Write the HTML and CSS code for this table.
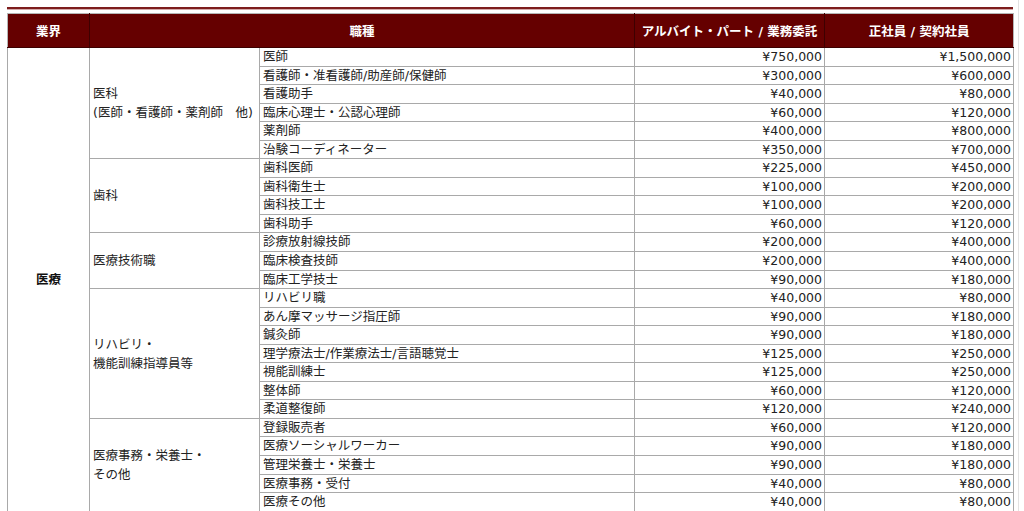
FILE: index.html
```html
<!DOCTYPE html>
<html lang="ja">
<head>
<meta charset="utf-8">
<link rel="stylesheet" href="styles.css">
</head>
<body>
<div class="page">
  <div class="rule"></div>
  <table class="fee">
    <colgroup>
      <col class="c1"><col class="c2"><col class="c3"><col class="c4"><col class="c5">
    </colgroup>
    <thead>
      <tr>
        <th>業界</th>
        <th colspan="2">職種</th>
        <th>アルバイト・パート / 業務委託</th>
        <th>正社員 / 契約社員</th>
      </tr>
    </thead>
    <tbody>
      <tr>
        <td class="ind" rowspan="25">医療</td>
        <td class="grp" rowspan="6">医科<br>(医師・看護師・薬剤師　他)</td>
        <td class="job">医師</td><td class="num">¥750,000</td><td class="num">¥1,500,000</td>
      </tr>
      <tr><td class="job">看護師・准看護師/助産師/保健師</td><td class="num">¥300,000</td><td class="num">¥600,000</td></tr>
      <tr><td class="job">看護助手</td><td class="num">¥40,000</td><td class="num">¥80,000</td></tr>
      <tr><td class="job">臨床心理士・公認心理師</td><td class="num">¥60,000</td><td class="num">¥120,000</td></tr>
      <tr><td class="job">薬剤師</td><td class="num">¥400,000</td><td class="num">¥800,000</td></tr>
      <tr><td class="job">治験コーディネーター</td><td class="num">¥350,000</td><td class="num">¥700,000</td></tr>
      <tr>
        <td class="grp" rowspan="4">歯科</td>
        <td class="job">歯科医師</td><td class="num">¥225,000</td><td class="num">¥450,000</td>
      </tr>
      <tr><td class="job">歯科衛生士</td><td class="num">¥100,000</td><td class="num">¥200,000</td></tr>
      <tr><td class="job">歯科技工士</td><td class="num">¥100,000</td><td class="num">¥200,000</td></tr>
      <tr><td class="job">歯科助手</td><td class="num">¥60,000</td><td class="num">¥120,000</td></tr>
      <tr>
        <td class="grp" rowspan="3">医療技術職</td>
        <td class="job">診療放射線技師</td><td class="num">¥200,000</td><td class="num">¥400,000</td>
      </tr>
      <tr><td class="job">臨床検査技師</td><td class="num">¥200,000</td><td class="num">¥400,000</td></tr>
      <tr><td class="job">臨床工学技士</td><td class="num">¥90,000</td><td class="num">¥180,000</td></tr>
      <tr>
        <td class="grp" rowspan="7">リハビリ・<br>機能訓練指導員等</td>
        <td class="job">リハビリ職</td><td class="num">¥40,000</td><td class="num">¥80,000</td>
      </tr>
      <tr><td class="job">あん摩マッサージ指圧師</td><td class="num">¥90,000</td><td class="num">¥180,000</td></tr>
      <tr><td class="job">鍼灸師</td><td class="num">¥90,000</td><td class="num">¥180,000</td></tr>
      <tr><td class="job">理学療法士/作業療法士/言語聴覚士</td><td class="num">¥125,000</td><td class="num">¥250,000</td></tr>
      <tr><td class="job">視能訓練士</td><td class="num">¥125,000</td><td class="num">¥250,000</td></tr>
      <tr><td class="job">整体師</td><td class="num">¥60,000</td><td class="num">¥120,000</td></tr>
      <tr><td class="job">柔道整復師</td><td class="num">¥120,000</td><td class="num">¥240,000</td></tr>
      <tr>
        <td class="grp" rowspan="5">医療事務・栄養士・<br>その他</td>
        <td class="job">登録販売者</td><td class="num">¥60,000</td><td class="num">¥120,000</td>
      </tr>
      <tr><td class="job">医療ソーシャルワーカー</td><td class="num">¥90,000</td><td class="num">¥180,000</td></tr>
      <tr><td class="job">管理栄養士・栄養士</td><td class="num">¥90,000</td><td class="num">¥180,000</td></tr>
      <tr><td class="job">医療事務・受付</td><td class="num">¥40,000</td><td class="num">¥80,000</td></tr>
      <tr><td class="job">医療その他</td><td class="num">¥40,000</td><td class="num">¥80,000</td></tr>
    </tbody>
  </table>
</div>
</body>
</html>
```

FILE: styles.css
```css
html, body {
  margin: 0;
  padding: 0;
  background: #fff;
}

body {
  font-family: "DejaVu Sans", "Noto Sans CJK JP", sans-serif;
  font-size: 12.5px;
  color: #222;
  overflow: hidden;
}

.page {
  width: 1006px;
  padding: 7px 5px 0 7px;
  border-right: 1px solid #e2e2e2;
  margin-right: 4px;
  box-sizing: content-box;
}

.rule {
  height: 2px;
  background: #7d1d1d;
  border-bottom: 1px solid #d3a9a9;
  margin-bottom: 3px;
}

.fee {
  width: 1006px;
  border-collapse: collapse;
  table-layout: fixed;
  border: 1px solid #b5b5b5;
}

.c1 { width: 82px; }
.c2 { width: 170px; }
.c3 { width: 375px; }
.c4 { width: 190px; }
.c5 { width: 189px; }

.fee th {
  background: #650000;
  color: #fff;
  font-weight: bold;
  height: 33px;
  padding: 0;
  text-align: center;
  vertical-align: middle;
  border: 1px solid #3d0000;
  border-top-color: #b5b5b5;
}

.fee th:first-child { border-left-color: #b5b5b5; }
.fee th:last-child { border-right-color: #b5b5b5; }

.fee td {
  border: 1px solid #a9a9a9;
  padding: 0 3px;
  line-height: 17.55px;
  height: 17.55px;
  vertical-align: middle;
  white-space: nowrap;
}

.fee td.ind {
  text-align: center;
  font-weight: bold;
  color: #111;
}

.fee td.grp {
  line-height: 19px;
}

.fee td.num {
  text-align: right;
  padding-right: 2px;
}
```
